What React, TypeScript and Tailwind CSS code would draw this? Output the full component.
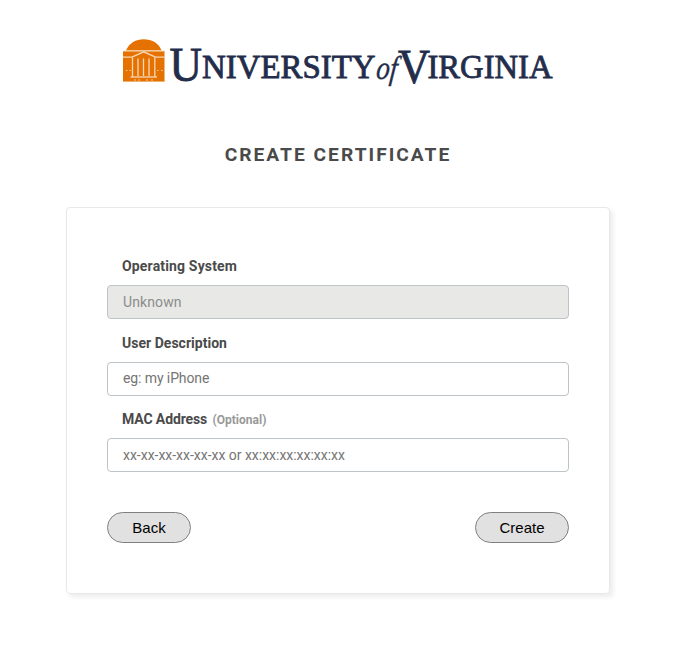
import React from "react";

function Logo() {
  return (
    <svg
      className="block h-[60px] w-[436px] [font-family:'Liberation_Serif',serif]"
      viewBox="120 36 436 60"
      role="img"
      aria-label="University of Virginia"
    >
      <path d="M126 50.5C129 43 136 39.2 143.7 39.2S159 43 161.5 50.5Z" fill="#e57200" />
      <path d="M123 51H164.5V82H123Z" fill="#e57200" />
      <g fill="none" stroke="#f8d8b8" strokeWidth="1.3">
        <path d="M123 51H164.5" strokeWidth="1.1" />
        <path d="M123 57.2H132L143.7 51.8L155.5 57.2H164.5" />
        <path d="M132.5 57.5V77M138 58.5V76M143.5 58.5V76M149 58.5V76M154.8 57.5V77" />
        <path d="M130.5 77H157" />
        <path d="M123 81.5H164.5" strokeWidth="0.6" />
        <path d="M125.8 70.5H127.4M129.5 70.5H131M157 70.5H158.5M161 70.5H162.6M134 80H136M138 80H140M146 80H148M151 80H153" strokeWidth="1.1" opacity="0.8" />
      </g>
      <g fill="#232d4b" stroke="#232d4b" strokeWidth="0.85">
        <text x="169.5" y="81" fontSize="48.5" textLength="32.5" lengthAdjust="spacingAndGlyphs">U</text>
        <text x="202" y="78.1" fontSize="34" textLength="173.5" lengthAdjust="spacingAndGlyphs">NIVERSITY</text>
        <text transform="translate(375.5 78.8) skewX(-6)" fontSize="33" fontStyle="italic" strokeWidth="0.4" textLength="21" lengthAdjust="spacingAndGlyphs">of</text>
        <text x="398" y="83" fontSize="48.5" textLength="32" lengthAdjust="spacingAndGlyphs">V</text>
        <text x="427.5" y="78.1" fontSize="34" textLength="125" lengthAdjust="spacingAndGlyphs">IRGINIA</text>
      </g>
    </svg>
  );
}

const field =
  "block h-[34px] w-full rounded-[4px] border border-[#bdc3c7] px-[15px] text-[14px] placeholder:text-[#757575]";
const label = "block pl-[15px] text-[14px] leading-5 font-bold";
const button =
  "h-[31px] rounded-[16px] border border-[#808080] bg-[#e1e1e1] pt-[2px] text-[15px] text-black [font-family:'Liberation_Sans',sans-serif]";

export default function App() {
  return (
    <main className="flex min-h-[664px] w-[676px] flex-col items-center bg-white pt-[36px] text-[#4a4a4a] [font-family:Roboto,sans-serif]">
      <Logo />
      <h1 className="mt-[47px] text-[19.2px] leading-6 font-bold tracking-[2px]">CREATE CERTIFICATE</h1>
      <form className="mt-[40px] h-[387px] w-[544px] rounded-[4px] border border-[#e7e8e8] px-[40px] pt-[48px] shadow-[3px_3px_5px_rgba(0,0,0,0.08)]">
        <label className={`${label} tracking-[0.16px]`} htmlFor="os">Operating System</label>
        <input id="os" className={`${field} mt-[9px] bg-[#e8e8e6] tracking-[0.12px] text-[#8b8d8c]`} value="Unknown" disabled readOnly />
        <label className={`${label} mt-[14px] tracking-[0.02px]`} htmlFor="description">User Description</label>
        <input id="description" className={`${field} mt-[9px] pb-[2px] tracking-[-0.1px]`} placeholder="eg: my iPhone" />
        <label className={`${label} mt-[13px] tracking-[-0.11px]`} htmlFor="mac">
          MAC Address <span className="ml-[2px] text-[12px] tracking-normal text-[#999]">(Optional)</span>
        </label>
        <input id="mac" className={`${field} mt-[8px] tracking-[-0.02px]`} placeholder="xx-xx-xx-xx-xx-xx or xx:xx:xx:xx:xx:xx" />
        <div className="mt-[40px] flex justify-between">
          <button type="button" className={`${button} w-[84px]`}>Back</button>
          <button type="button" className={`${button} w-[94px]`}>Create</button>
        </div>
      </form>
    </main>
  );
}
